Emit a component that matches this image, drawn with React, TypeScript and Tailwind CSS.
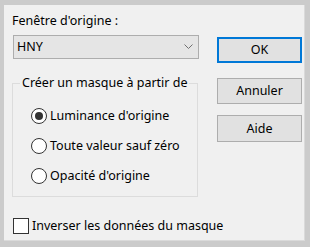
export default function App() {
	const font = { fontFamily: '"Noto Sans", "Open Sans", sans-serif' };
	const radios = ["Luminance d'origine", "Toute valeur sauf zéro", "Opacité d'origine"];

	return (
		<div className="w-[310px] h-[247px] bg-[#cbcbcb] pl-[4px] pr-[5px] pt-[5px] pb-[6px]" style={font}>
			<div className="h-full w-full bg-[#f0f0f0] border-r border-b border-[#dadada] flex flex-col pl-[8px] text-[12.5px] text-black leading-[16px]">
				<div className="flex items-start">
					{/* Colonne gauche */}
					<div className="w-[187px] flex flex-col">
						<div className="mt-[8px] h-[16px]">Fenêtre d'origine :</div>
						<div className="mt-[6px] ml-[1px] h-[24px] bg-[#e5e5e5] border border-[#adadad] flex items-center justify-between pl-[3px] pr-[5px]">
							<span>HNY</span>
							<svg width="9" height="5" viewBox="0 0 9 5" className="mb-[1px]">
								<polyline points="0.5,0.5 4.5,4.5 8.5,0.5" fill="none" stroke="#707070" strokeWidth="1" />
							</svg>
						</div>
						<fieldset className="mt-[16px] w-[186px] border border-[#dcdcdc] pb-[5px] pt-[10px]">
							<legend className="ml-[7px] px-[2px] h-[16px]">Créer un masque à partir de</legend>
							{radios.map((label, i) => (
								<div key={label} className="h-[30px] flex items-center pl-[18px]">
									<div className="w-[16px] h-[16px] rounded-full border border-[#333333] bg-white flex items-center justify-center">
										{i === 0 && <div className="w-[8px] h-[8px] rounded-full bg-[#333333]" />}
									</div>
									<span className="ml-[3px]">{label}</span>
								</div>
							))}
						</fieldset>
					</div>

					{/* Boutons */}
					<div className="ml-[18px] w-[85px] flex flex-col">
						<button className="mt-[32px] h-[26px] bg-[#e1e1e1] border-2 border-[#0078d7] text-center">OK</button>
						<button className="mt-[15px] h-[26px] bg-[#e1e1e1] border border-[#adadad] text-center">Annuler</button>
						<button className="mt-[11px] h-[27px] bg-[#e1e1e1] border border-[#adadad] text-center">Aide</button>
					</div>
				</div>

				<div className="mt-[21px] ml-[1px] flex items-center h-[16px]">
					<div className="w-[16px] h-[16px] border border-[#333333] bg-white" />
					<span className="ml-[3px]">Inverser les données du masque</span>
				</div>
			</div>
		</div>
	);
}
